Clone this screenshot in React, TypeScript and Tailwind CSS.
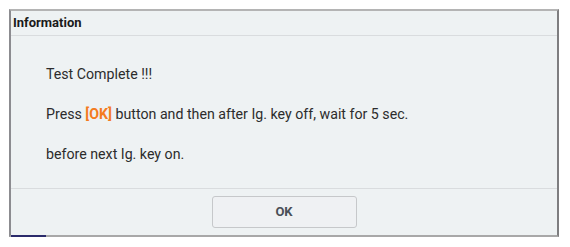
export default function App() {
  return (
    <div className="w-[570px] h-[247px] bg-white pt-[9px] pl-[9px]" style={{ fontFamily: "Roboto, 'Liberation Sans', sans-serif" }}>
      <div className="relative w-[550px] h-[228px] flex flex-col bg-[#eef2f3] border-l-2 border-l-[#8c8c90] border-t-2 border-t-[#b4b4b4] border-r-2 border-r-[#7e7e80] border-b-2 border-b-[#a8a8a8]">
        <div className="h-[25px] flex items-center pl-[2px] border-b border-[#d9dcde]">
          <span className="text-[13px] font-bold text-[#1a1a1a]">Information</span>
        </div>
        <div className="flex-1 flex flex-col pl-[35px] pt-[28px] gap-[20px] text-[14.2px] text-[#2c2c2c]">
          <p className="leading-[20px]">Test Complete !!!</p>
          <p className="leading-[20px]">
            Press <span className="font-bold text-[#f47b20]">[OK]</span> button and then after Ig. key off, wait for 5 sec.
          </p>
          <p className="leading-[20px]">before next Ig. key on.</p>
        </div>
        <div className="h-[47px] flex items-center justify-center border-t border-[#d9dcde]">
          <button className="w-[145px] h-[32px] rounded-[3px] border border-[#c6c8ca] bg-[#eff1f3] text-[13px] font-bold text-[#4a4f57]">
            OK
          </button>
        </div>
        <div className="absolute left-0 bottom-[-2px] w-[35px] h-[2px] bg-[#2b2b6b]" />
      </div>
    </div>
  );
}
